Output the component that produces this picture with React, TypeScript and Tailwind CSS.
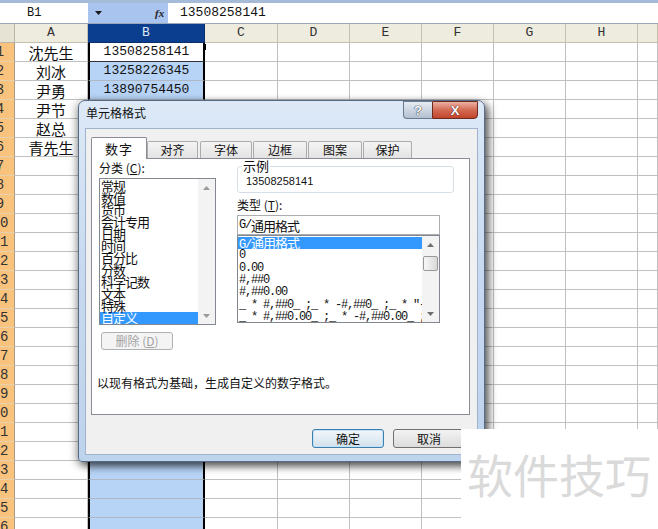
import React from 'react';

const names = ['沈先生', '刘冰', '尹勇', '尹节', '赵总', '青先生'];
const phones = ['13508258141', '13258226345', '13890754450'];

const cols: { label: string; w: string }[] = [
  { label: 'C', w: 'w-[73px]' },
  { label: 'D', w: 'w-[72px]' },
  { label: 'E', w: 'w-[72px]' },
  { label: 'F', w: 'w-[72px]' },
  { label: 'G', w: 'w-[72px]' },
  { label: 'H', w: 'w-[72px]' },
  { label: '', w: 'w-[20px]' },
];

const MONO = "font-['Liberation_Mono','Noto_Sans_CJK_SC',monospace]";
const CJK = "font-['Noto_Sans_CJK_SC',sans-serif]";

function Sheet() {
  return (
    <div className="flex flex-col">
      <div className="h-[3px] bg-[#a6bbd8]" />
      <div className="flex h-[21px] border-b border-[#9aa6b8]">
        <div className={`w-[88px] bg-white flex items-center pl-[27px] ${MONO} text-[12px] text-[#111]`}>B1</div>
        <div className="w-[80px] bg-[#a9c4ef] flex items-center">
          <svg className="ml-[7px]" width="7" height="4" viewBox="0 0 7 4">
            <path d="M0 0H7L3.5 4Z" fill="#1a1a1a" />
          </svg>
          <span className="ml-[53px] font-['Liberation_Serif',serif] italic font-bold text-[11px] text-[#222] leading-none">fx</span>
        </div>
        <div className={`flex-1 bg-white flex items-center pl-[12px] ${MONO} text-[13px] text-[#111]`}>13508258141</div>
      </div>
      {/* header row */}
      <div className={`flex h-[19px] ${MONO} text-[13px] text-[#333]`}>
        <div className="w-[15px] shrink-0 bg-[#e6e3d5] border-r border-b border-[#b9b6a6]" />
        <div className="w-[73px] shrink-0 bg-[#eeebdf] border-r border-b border-[#c4c1b1] flex items-center justify-center">A</div>
        <div className="w-[117px] shrink-0 bg-[#0b3e8e] border-r border-b border-[#0a2f6a] flex items-center justify-center text-[#dfe8f7]">B</div>
        {cols.map((c, i) => (
          <div key={i} className={`${c.w} shrink-0 bg-[#eeebdf] border-r border-b border-[#c4c1b1] flex items-center justify-center`}>
            {c.label}
          </div>
        ))}
      </div>
      {Array.from({ length: 26 }, (_, i) => {
        const r = i + 1;
        return (
          <div key={r} className="flex h-[19px]">
            <div className="w-[15px] shrink-0 overflow-hidden bg-[#f9c37d] border-b border-b-[#e7d2b0] border-r border-r-[#a89a84]">
              <div className={`-ml-[15px] w-[30px] text-center ${MONO} text-[14px] leading-[18px] text-[#333]`}>{r}</div>
            </div>
            <div className={`w-[73px] shrink-0 border-r border-b border-[#c0c0c0] flex items-center justify-center ${CJK} text-[15px] leading-none text-[#111]`}>
              {names[i] ?? ''}
            </div>
            <div
              className={`relative w-[117px] shrink-0 border-x-2 border-x-black border-b flex items-center justify-center ${MONO} text-[13px] text-[#111] ${
                r === 1 ? 'bg-white border-b-[#333]' : 'bg-[#b7d3f5] border-b-[#b0b8c4]'
              }`}
            >
              {phones[i] ?? ''}
              {r === 1 ? <div className="absolute -right-[3px] top-[1px] w-[3px] h-[6px] bg-black" /> : null}
            </div>
            {cols.map((c, j) => (
              <div key={j} className={`${c.w} shrink-0 border-r border-b border-[#c0c0c0]`} />
            ))}
          </div>
        );
      })}
    </div>
  );
}

function Scrollbar({ thumb, dark }: { thumb?: boolean; dark?: boolean }) {
  const fill = dark ? '#6e6e6e' : '#9a9a9a';
  return (
    <div className="w-[17px] shrink-0 flex flex-col bg-[#f3f3f3]">
      <div className="h-[17px] flex items-center justify-center">
        <svg width="7" height="4" viewBox="0 0 7 4">
          <path d="M0 4L3.5 0L7 4Z" fill={fill} />
        </svg>
      </div>
      {thumb ? (
        <div className="mx-[1px] mt-[3px] h-[15px] rounded-[2px] border border-[#999] bg-gradient-to-r from-[#f7f7f7] to-[#d9d9d9]" />
      ) : null}
      <div className="flex-1" />
      <div className="h-[17px] flex items-center justify-center">
        <svg width="7" height="4" viewBox="0 0 7 4">
          <path d="M0 0H7L3.5 4Z" fill={fill} />
        </svg>
      </div>
    </div>
  );
}

const categories = ['常规', '数值', '货币', '会计专用', '日期', '时间', '百分比', '分数', '科学记数', '文本', '特殊', '自定义'];

function Dialog() {
  return (
    <div className="absolute left-[78px] top-[100px] w-[407px] h-[362px] flex flex-col rounded-t-[7px] rounded-b-[4px] border border-[#566b86] bg-gradient-to-b from-[#dde9f7] via-[#c6d9f0] to-[#bed3ec] shadow-[4px_4px_9px_rgba(0,0,0,0.6),-2px_2px_8px_rgba(0,0,0,0.3)]">
      {/* title bar */}
      <div className="h-[27px] shrink-0 flex items-start">
        <span className={`pl-[7px] pt-[5px] ${CJK} text-[12px] leading-[14px] text-[#111]`}>单元格格式</span>
        <div className="ml-auto mr-[6px] flex">
          <div className="w-[29px] h-[18px] rounded-bl-[4px] border border-[#6b7c92] border-r-0 bg-gradient-to-b from-[#e6ecf3] to-[#b3c0d0] flex items-center justify-center">
            <span className="font-['Liberation_Sans',sans-serif] font-bold text-[13px] leading-none text-white [text-shadow:0_0_1px_#223,0_0_1px_#223]">?</span>
          </div>
          <div className="w-[46px] h-[18px] rounded-br-[4px] border border-[#6d2b20] bg-gradient-to-b from-[#eab0a2] via-[#d36a53] to-[#c2452c] flex items-center justify-center">
            <span className="font-['Liberation_Sans',sans-serif] font-bold text-[13px] leading-none text-white [text-shadow:0_0_1px_#511,0_0_1px_#511]">X</span>
          </div>
        </div>
      </div>
      {/* client */}
      <div className="flex-1 mx-[6px] mb-[6px] bg-[#f0f0f0] border border-[#9fb3cc] flex flex-col pt-[8px] pl-[5px] pr-[7px]">
        {/* tabs */}
        <div className={`flex items-end h-[21px] ${CJK} text-[12px] text-[#111]`}>
          <div className="relative z-10 w-[56px] h-[22px] -mb-px bg-white border border-b-0 border-[#898c95] rounded-t-[2px] flex items-center justify-center text-[13px] tracking-[1px]">
            数字
          </div>
          <div className="w-[51px] h-[17px] border border-b-0 border-[#acacac] rounded-t-[2px] bg-gradient-to-b from-[#f4f4f4] to-[#e3e3e3] flex items-center justify-center">对齐</div>
          <div className="ml-[2px] w-[52px] h-[17px] border border-b-0 border-[#acacac] rounded-t-[2px] bg-gradient-to-b from-[#f4f4f4] to-[#e3e3e3] flex items-center justify-center">字体</div>
          <div className="ml-[1px] w-[54px] h-[17px] border border-b-0 border-[#acacac] rounded-t-[2px] bg-gradient-to-b from-[#f4f4f4] to-[#e3e3e3] flex items-center justify-center">边框</div>
          <div className="ml-[1px] w-[54px] h-[17px] border border-b-0 border-[#acacac] rounded-t-[2px] bg-gradient-to-b from-[#f4f4f4] to-[#e3e3e3] flex items-center justify-center">图案</div>
          <div className="ml-[1px] w-[49px] h-[17px] border border-b-0 border-[#acacac] rounded-t-[2px] bg-gradient-to-b from-[#f4f4f4] to-[#e3e3e3] flex items-center justify-center">保护</div>
        </div>
        {/* panel */}
        <div className={`h-[257px] bg-white border border-[#898c95] pt-[2px] pl-[7px] ${CJK} text-[12px] text-[#111]`}>
          <div className="flex">
            <div className="w-[117px] flex flex-col">
              <div className="h-[14px] leading-[14px]">
                分类 (<span className="underline">C</span>):
              </div>
              <div className="mt-[3px] h-[147px] border border-[#828790] flex bg-white">
                <div className="flex-1 pt-[1px] overflow-hidden">
                  {categories.map((c, i) => (
                    <div
                      key={c}
                      className={`h-[12px] leading-[12px] text-[13px] tracking-[-1px] pl-[1px] whitespace-nowrap ${
                        i === categories.length - 1 ? 'bg-[#3399ff] text-white' : ''
                      }`}
                    >
                      {c}
                    </div>
                  ))}
                </div>
                <Scrollbar />
              </div>
              <div className="mt-[7px] ml-[2px] w-[72px] h-[18px] border border-[#adb2b5] rounded-[3px] bg-[#f4f4f4] text-[#a3a3a3] flex items-center justify-center leading-none">
                删除 (<span className="underline">D</span>)
              </div>
            </div>
            <div className="ml-[21px] w-[217px] flex flex-col">
              <div className="relative mt-[5px] h-[27px] border border-[#d5dfe5] rounded-[3px] pl-[8px] pt-[8px]">
                <span className="absolute -top-[8px] left-[4px] bg-white px-[1px] leading-[14px] text-[13px]">示例</span>
                <div className="font-['Liberation_Sans',sans-serif] text-[11px] leading-[12px]">13508258141</div>
              </div>
              <div className="mt-[5px] h-[14px] leading-[14px]">
                类型 (<span className="underline">T</span>):
              </div>
              <div className="mt-[3px] w-[203px] h-[20px] border border-[#abadb3] flex items-center pl-[1px] leading-none">
                <span className={`${MONO} tracking-[-1.2px]`}>G/</span>
                <span className="text-[13px] tracking-[-1px]">通用格式</span>
              </div>
              <div className="w-[203px] h-[88px] border border-[#828790] flex">
                <div className={`flex-1 pt-[1px] overflow-hidden ${MONO} text-[12px] tracking-[-1.2px]`}>
                  <div className="h-[12.33px] leading-[12px] bg-[#3399ff] text-white whitespace-nowrap pl-[1px]">
                    G/<span className={`${CJK} text-[13px] tracking-[-1px]`}>通用格式</span>
                  </div>
                  {['0', '0.00', '#,##0', '#,##0.00', '_ * #,##0_ ;_ * -#,##0_ ;_ * "-"_ ;_ @_ ', '_ * #,##0.00_ ;_ * -#,##0.00_ ;_ * "-"??_ ;_ @_ '].map(
                    (t, i) => (
                      <div key={i} className="h-[12.33px] leading-[12px] whitespace-pre overflow-hidden pl-[1px]">
                        {t}
                      </div>
                    )
                  )}
                </div>
                <Scrollbar thumb dark />
              </div>
            </div>
          </div>
          <div className="mt-[26px] -ml-[2px] leading-[14px]">以现有格式为基础，生成自定义的数字格式。</div>
        </div>
        {/* footer */}
        <div className={`mt-[14px] flex justify-end gap-[9px] pr-[5px] ${CJK} text-[12px] text-[#111]`}>
          <div className="w-[72px] h-[19px] rounded-[3px] border border-[#3c7fb1] bg-gradient-to-b from-[#f2f7fb] to-[#d3e1ec] shadow-[inset_0_0_0_1px_#c5e3f7] flex items-center justify-center leading-none">
            确定
          </div>
          <div className="w-[72px] h-[19px] rounded-[3px] border border-[#707070] bg-gradient-to-b from-[#f3f3f3] to-[#dcdcdc] flex items-center justify-center leading-none">
            取消
          </div>
        </div>
      </div>
    </div>
  );
}

function Watermark() {
  return (
    <div className="absolute left-[461px] top-[429px] w-[197px] h-[100px] bg-white pl-[6px] pt-[21px]">
      <div className={`${CJK} text-[46px] leading-none text-[#dadada] whitespace-nowrap`}>软件技巧</div>
    </div>
  );
}

export default function App() {
  return (
    <div className="relative w-[658px] h-[529px] overflow-hidden bg-white text-black">
      <Sheet />
      <Dialog />
      <Watermark />
    </div>
  );
}
